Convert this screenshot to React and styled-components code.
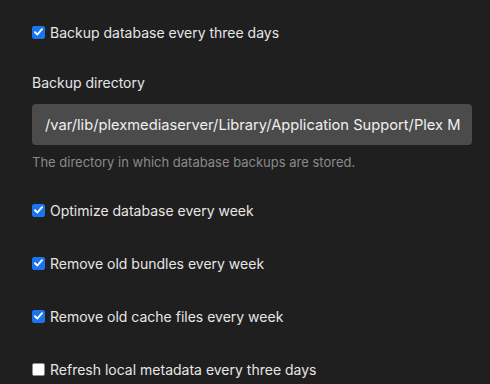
import React from 'react';
import styled, {createGlobalStyle} from 'styled-components';

const GlobalStyle = createGlobalStyle`
  html, body {
    margin: 0;
    padding: 0;
    background: #1f1f1f;
  }
  body {
    font-family: Inter, "Open Sans", "Liberation Sans", sans-serif;
    color: #e6e6e6;
  }
`;

const Page = styled.div`
  display: flex;
  flex-direction: column;
  padding: 22px 18px 0 32px;
  width: 490px;
  height: 384px;
  box-sizing: border-box;
  overflow: hidden;
`;

const CheckRow = styled.label`
  display: flex;
  align-items: center;
  gap: 5px;
  height: 20px;
  font-size: 14px;
  color: #e6e6e6;
  margin-bottom: ${(p) => p.$after ?? 33}px;
`;

const Box = styled.span`
  width: 13px;
  height: 13px;
  box-sizing: border-box;
  border-radius: 2px;
  display: flex;
  align-items: center;
  justify-content: center;
  flex-shrink: 0;
  background: ${(p) => (p.$checked ? '#1a74f0' : '#ffffff')};
  border: 1px solid ${(p) => (p.$checked ? '#1a74f0' : '#8c8c8c')};
`;

const Field = styled.div`
  display: flex;
  flex-direction: column;
  margin-bottom: 29px;
`;

const FieldLabel = styled.div`
  font-size: 14px;
  height: 20px;
  line-height: 20px;
  margin-bottom: 11px;
  color: #e6e6e6;
`;

const Input = styled.div`
  height: 41px;
  width: 440px;
  box-sizing: border-box;
  background: #4b4b4b;
  border-radius: 4px;
  padding: 0 12px 0 13px;
  display: flex;
  align-items: center;
`;

const InputText = styled.span`
  flex: 1;
  min-width: 0;
  font-size: 14.7px;
  color: #f0f0f0;
  white-space: nowrap;
  overflow: hidden;
`;

const Help = styled.div`
  margin-top: 8px;
  font-size: 13px;
  color: #8a8a8a;
  height: 18px;
  line-height: 18px;
`;

const Check = () => (
  <svg width="9" height="8" viewBox="0 0 9 8">
    <path d="M1 4.2 L3.4 6.5 L8 1.2" stroke="#fff" strokeWidth="1.9" fill="none" strokeLinecap="round" strokeLinejoin="round"/>
  </svg>
);

const Option = ({checked, children, after}) => (
  <CheckRow $after={after}>
    <Box $checked={checked}>{checked && <Check/>}</Box>
    {children}
  </CheckRow>
);

export default function App() {
  return (
    <>
      <GlobalStyle/>
      <Page>
        <Option checked after={31}>Backup database every three days</Option>
        <Field>
          <FieldLabel>Backup directory</FieldLabel>
          <Input>
            <InputText>/var/lib/plexmediaserver/Library/Application Support/Plex Media Server</InputText>
          </Input>
          <Help>The directory in which database backups are stored.</Help>
        </Field>
        <Option checked>Optimize database every week</Option>
        <Option checked>Remove old bundles every week</Option>
        <Option checked>Remove old cache files every week</Option>
        <Option after={0}>Refresh local metadata every three days</Option>
      </Page>
    </>
  );
}
